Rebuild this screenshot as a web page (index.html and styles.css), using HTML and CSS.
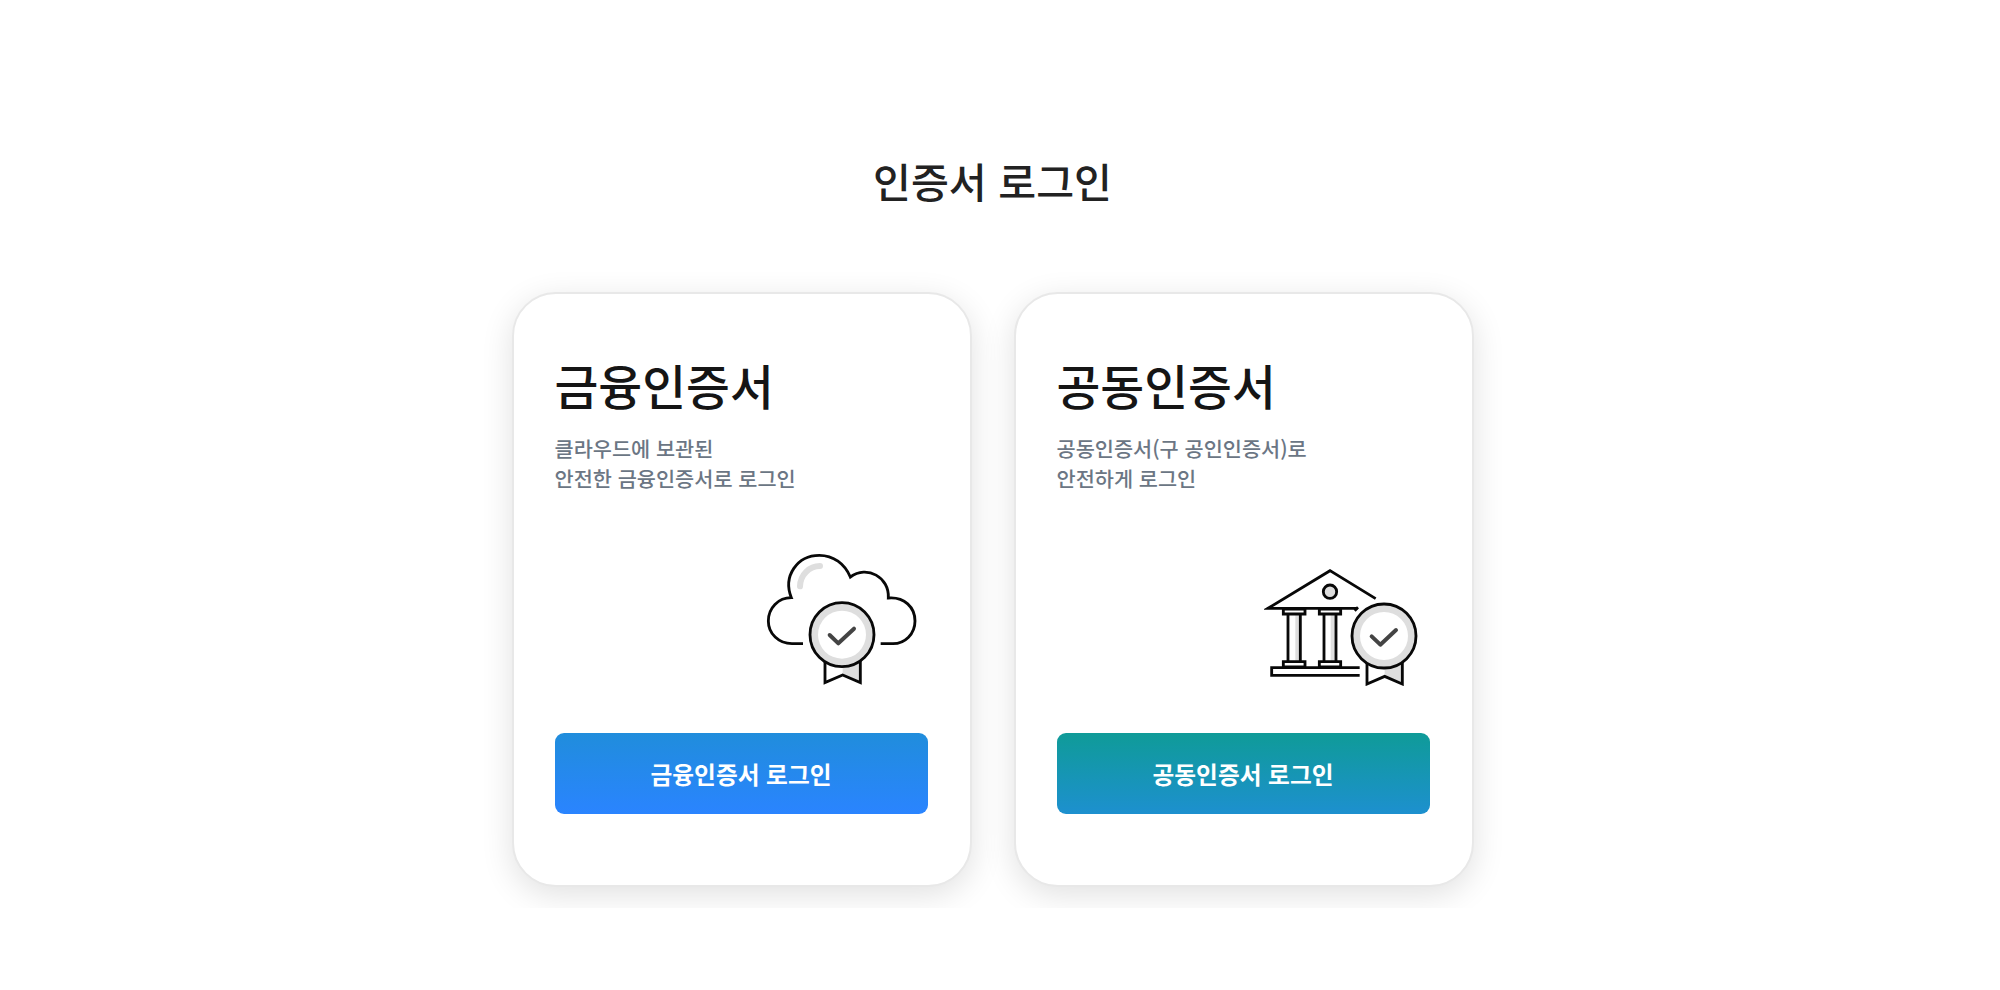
FILE: index.html
```html
<!DOCTYPE html>
<html lang="ko">
<head>
    <meta charset="UTF-8">
    <meta name="viewport" content="width=device-width, initial-scale=1.0">
    <title>인증서 로그인</title>
    <link rel="stylesheet" href="styles.css">
</head>
<body>

    <div class="login-wrap">
        <h2 class="page-title">인증서 로그인</h2>

        <div class="card-list">
            <div class="card">
                <h3>금융인증서</h3>
                <p>클라우드에 보관된<br>안전한 금융인증서로 로그인</p>
                <div class="icon-area">
                    <svg width="152" height="134" viewBox="48 36 456 402" fill="none">
                        <!-- cloud -->
                        <path class="line" d="M159 311H126C86 311 55 281 55 243C55 204 85 173 124 173C98 108 142 46 208 46C250 46 284 71 301 111C351 74 419 112 415 174C463 170 495 202 495 243C495 282 465 311 429 311H392"/>
                        <path class="shine" d="M150 139C151 104 178 78 210 78"/>
                        <!-- badge -->
                        <path class="ribbon" d="M225 360V428L278 405L331 428V360Z"/>
                        <path class="gray" d="M278 370H328V422L278 403Z"/>
                        <path class="line" d="M225 360V428L278 405L331 428V360"/>
                        <circle class="gray" cx="276" cy="284" r="96"/>
                        <circle class="white" cx="276" cy="284" r="72"/>
                        <circle class="line" cx="276" cy="284" r="96"/>
                        <path class="check" d="M239 285L265 310L312 266"/>
                    </svg>
                </div>
                <button type="button" class="btn btn-blue">금융인증서 로그인</button>
            </div>

            <div class="card">
                <h3>공동인증서</h3>
                <p>공동인증서(구 공인인증서)로<br>안전하게 로그인</p>
                <div class="icon-area">
                    <svg width="154" height="118" viewBox="42 54 462 354" fill="none">
                        <!-- bank -->
                        <path class="line" d="M377 146L240 62L54 175H324M314 182L324 172"/>
                        <circle class="line gray" cx="240" cy="125" r="20"/>
                        <path class="gray" d="M136 193H149V334H136ZM242 193H256V334H242Z"/>
                        <path class="line" d="M100 177H165V192H100ZM208 177H272V192H208ZM114 192V335M151 192V335M222 192V335M258 192V335M100 335H165V351H100ZM208 335H272V351H208Z"/>
                        <path class="line" d="M329 353H65V376H329"/>
                        <!-- badge -->
                        <path class="ribbon" d="M351 334V402L404 379L457 402V334Z"/>
                        <path class="gray" d="M404 344H454V396L404 377Z"/>
                        <path class="line" d="M351 334V402L404 379L457 402V334"/>
                        <circle class="gray" cx="402" cy="258" r="96"/>
                        <circle class="white" cx="402" cy="258" r="72"/>
                        <circle class="line" cx="402" cy="258" r="96"/>
                        <path class="check" d="M365 259L391 284L438 240"/>
                    </svg>
                </div>
                <button type="button" class="btn btn-green">공동인증서 로그인</button>
            </div>
        </div>
    </div>

</body>
</html>
```

FILE: styles.css
```css
* {
    box-sizing: border-box;
}

body {
    margin: 0;
    padding: 150px 15px 0 0;
    background-color: #fff;
    font-family: 'Noto Sans CJK KR', sans-serif;
}

.login-wrap {
    width: 1040px;
    margin: 0 auto;
}

.page-title {
    margin: 0;
    text-align: center;
    font-size: 41.2px;
    line-height: 60px;
    font-weight: 500;
    color: #222;
}

/* the bottom of the card shadow is cut off here */
.card-list {
    display: flex;
    justify-content: center;
    gap: 42px;
    margin-top: 40px;
    padding: 42px 0 21px;
    overflow: hidden;
}

.card {
    display: flex;
    flex-direction: column;
    width: 460px;
    height: 595px;
    padding: 56px 42px 0 41px;
    border: 2px solid #e8e8e8;
    border-radius: 44px;
    background-color: #fff;
    box-shadow: 0 8px 32px rgba(0, 0, 0, 0.12);
}

.card h3 {
    margin: 0;
    font-size: 47.7px;
    line-height: 70px;
    font-weight: 500;
    color: #151515;
}

.card p {
    margin: 13px 0 0;
    font-size: 20.8px;
    line-height: 30px;
    font-weight: 500;
    color: #6b7684;
}

.icon-area {
    display: flex;
    justify-content: flex-end;
    align-items: flex-end;
    height: 193px;
    padding-right: 10px;
}

.card:last-child .icon-area {
    padding-right: 12px;
}

.btn {
    height: 81px;
    margin-top: 47px;
    padding: 0;
    border: none;
    border-radius: 9px;
    font-family: inherit;
    font-size: 23.7px;
    font-weight: 700;
    color: #fff;
    cursor: pointer;
}

.btn-blue {
    background: linear-gradient(#208ddc, #2a84ff);
}

.btn-green {
    background: linear-gradient(#0f9b98, #1d90cf);
}

.line {
    stroke: #080808;
    stroke-width: 8.5;
}

.gray {
    fill: #dedede;
}

.white,
.ribbon {
    fill: #fff;
}

.shine {
    stroke: #dedede;
    stroke-width: 18;
    stroke-linecap: round;
}

.check {
    stroke: #444;
    stroke-width: 12;
    stroke-linecap: round;
    stroke-linejoin: round;
}
```
